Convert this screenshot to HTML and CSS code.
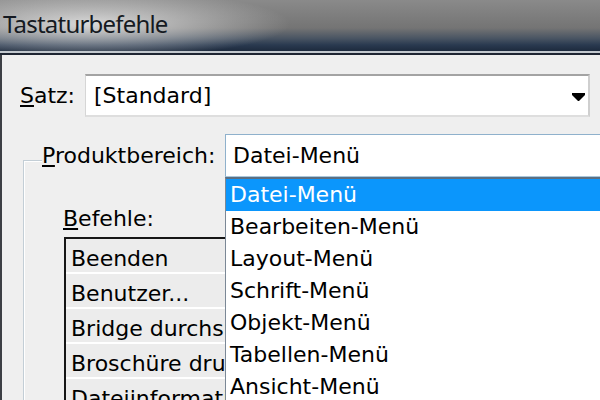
FILE: index.html
```html
<!DOCTYPE html>
<html lang="de">
<head>
<meta charset="utf-8">
<title>Tastaturbefehle</title>
<link rel="stylesheet" href="styles.css">
</head>
<body>
<div class="window">
  <div class="titlebar">Tastaturbefehle</div>
  <div class="edge-light"></div>
  <div class="edge-dark"></div>
  <div class="client">
    <div class="set-row">
      <span class="set-label"><u>S</u>atz:</span>
      <div class="combo-set">
        <span class="combo-value">[Standard]</span>
        <svg class="arrow" width="13" height="8" viewBox="0 0 13 8"><polygon points="0,0 13,0 13,2 7,8 6,8 0,2" fill="#000"/></svg>
      </div>
    </div>
    <fieldset class="group">
      <legend class="group-head">
        <span class="product-label"><u>P</u>roduktbereich:</span>
        <div class="combo-product">
          <span class="combo-value">Datei-Menü</span>
          <ul class="dropdown">
            <li class="selected">Datei-Menü</li>
            <li>Bearbeiten-Menü</li>
            <li>Layout-Menü</li>
            <li>Schrift-Menü</li>
            <li>Objekt-Menü</li>
            <li>Tabellen-Menü</li>
            <li>Ansicht-Menü</li>
          </ul>
        </div>
      </legend>
      <div class="cmd-label"><u>B</u>efehle:</div>
      <ul class="listbox">
        <li>Beenden</li>
        <li>Benutzer...</li>
        <li>Bridge durchsuchen...</li>
        <li>Broschüre drucken...</li>
        <li>Dateiinformationen...</li>
      </ul>
    </fieldset>
  </div>
</div>
</body>
</html>
```
FILE: styles.css
```css
html, body {
  margin: 0;
  padding: 0;
  width: 600px;
  height: 400px;
  overflow: hidden;
  background: #efefef;
}
body {
  font-family: "DejaVu Sans", Verdana, sans-serif;
  font-size: 22px;
  color: #000;
}
.window {
  width: 600px;
  height: 400px;
  overflow: hidden;
}
.titlebar {
  height: 51px;
  box-sizing: border-box;
  padding: 0 0 3px 3px;
  line-height: 48px;
  font-family: "Noto Sans", "Open Sans", sans-serif;
  font-size: 24px;
  letter-spacing: -0.8px;
  color: #151a22;
  background:
    radial-gradient(ellipse 200px 34px at 90px 24px, rgba(222,222,222,0.95), rgba(222,222,222,0) 100%),
    linear-gradient(to bottom, #8a8a8a 0%, #747474 55%, #4a5563 75%, #2a3a50 88%, #1d2a3d 100%);
}
.edge-light {
  height: 2px;
  background: #c3c9cf;
}
.edge-dark {
  height: 2px;
  background: #1e2532;
}
.client {
  height: 345px;
  box-sizing: border-box;
  border-left: 2px solid #3c3f45;
  padding-top: 19px;
  background: #efefef;
}
.set-row {
  display: flex;
  align-items: center;
  padding-left: 18px;
}
.set-label {
  width: 65px;
  flex: none;
}
.combo-set {
  display: flex;
  align-items: center;
  width: 505px;
  height: 43px;
  box-sizing: border-box;
  background: #fff;
  border-top: 2px solid #a3a3a3;
  border-left: 1px solid #d6d6d6;
  border-right: 2px solid #cfcfcf;
  border-bottom: 2px solid #dedede;
  padding-left: 8px;
  line-height: 39px;
}
.arrow {
  margin-left: auto;
  margin-right: 3px;
  margin-top: 3px;
  display: block;
}
.group {
  margin: 17px 0 0 21px;
  padding: 0;
  width: 640px;
  box-sizing: border-box;
  border: none;
  border-left: 1px solid #c3ced6;
  border-top: 1px solid #c3ced6;
  box-shadow: inset 1px 1px 0 #ffffff;
  min-height: 300px;
}
.group-head {
  display: flex;
  align-items: baseline;
  margin-left: 18px;
  padding: 0 0 9px 0;
  background: #efefef;
}
.product-label {
  width: 183px;
  flex: none;
  line-height: 32px;
}
.combo-product {
  position: relative;
  flex: none;
  width: 400px;
  height: 43px;
  box-sizing: border-box;
  background: #fff;
  border: 1px solid #8fb1cc;
  border-right: none;
  border-bottom-color: #a9c7dc;
  padding-left: 7px;
  line-height: 41px;
}
.dropdown {
  position: absolute;
  top: calc(100% + 1px);
  left: -1px;
  width: 400px;
  height: 260px;
  margin: 0;
  padding: 0;
  list-style: none;
  background: #fff;
  border-top: 2px solid #5c6f82;
  border-left: 1px solid #7b8896;
}
.dropdown li {
  height: 32px;
  line-height: 32px;
  padding-left: 4px;
  white-space: nowrap;
}
.dropdown li.selected {
  background: #0b96fc;
  color: #fff;
}
.cmd-label {
  margin-top: 17px;
  padding-left: 39px;
  line-height: 32px;
}
.listbox {
  margin: 2px 0 0 40px;
  padding: 0;
  list-style: none;
  width: 300px;
  border-left: 2px solid #161616;
  border-top: 2px solid #161616;
}
.listbox li {
  padding: 6px 0 0 5px;
  line-height: 27px;
  background: #ececec;
  border-bottom: 2px solid #fff;
  white-space: nowrap;
}
```
